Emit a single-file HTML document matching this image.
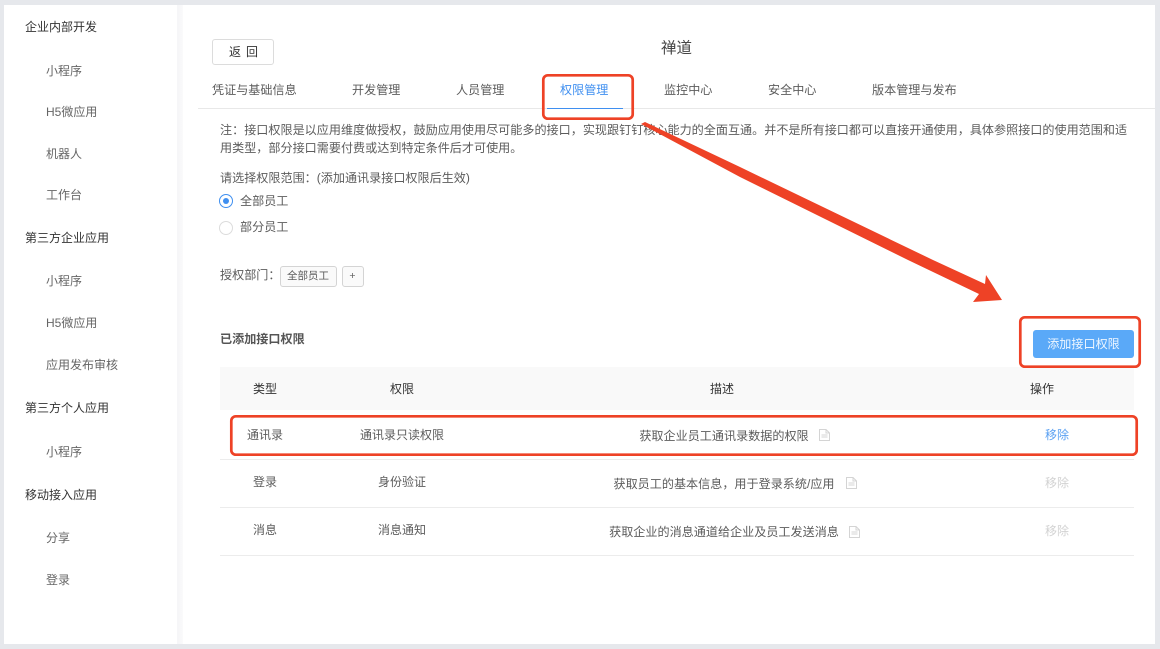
<!DOCTYPE html>
<html lang="zh">
<head>
<meta charset="utf-8">
<style>
html,body{margin:0;padding:0;width:1160px;height:649px;overflow:hidden;background:#e6e8ec}
body{position:relative;font-family:"Liberation Sans","Noto Sans CJK SC",sans-serif;font-size:12px;color:#5c5c5c}
#w{position:absolute;left:0;top:0;width:1160px;height:649px;filter:blur(.3px)}
.b{position:absolute}
.t{position:absolute;white-space:nowrap;line-height:20px;height:20px}
.c{transform:translateX(-50%)}
.h{color:#333}
.s{color:#666}
.l{position:absolute;height:1px;background:#ececec}
svg{position:absolute}
</style>
</head>
<body>
<div id="w">
<div class="b" style="left:4px;top:5px;width:173px;height:639px;background:#fff"></div>
<div class="b" style="left:177px;top:5px;width:6px;height:639px;background:linear-gradient(90deg,#f5f5f7,#fafafb)"></div>
<div class="b" style="left:183px;top:5px;width:972px;height:639px;background:#fff"></div>

<div class="t h" style="left:25px;top:17px">企业内部开发</div>
<div class="t s" style="left:46px;top:61px">小程序</div>
<div class="t s" style="left:46px;top:102px">H5微应用</div>
<div class="t s" style="left:46px;top:144px">机器人</div>
<div class="t s" style="left:46px;top:185px">工作台</div>
<div class="t h" style="left:25px;top:228px">第三方企业应用</div>
<div class="t s" style="left:46px;top:271px">小程序</div>
<div class="t s" style="left:46px;top:313px">H5微应用</div>
<div class="t s" style="left:46px;top:355px">应用发布审核</div>
<div class="t h" style="left:25px;top:398px">第三方个人应用</div>
<div class="t s" style="left:46px;top:442px">小程序</div>
<div class="t h" style="left:25px;top:485px">移动接入应用</div>
<div class="t s" style="left:46px;top:528px">分享</div>
<div class="t s" style="left:46px;top:570px">登录</div>

<div class="b" style="left:212px;top:39px;width:62px;height:26px;box-sizing:border-box;border:1px solid #dcdcdc;border-radius:3px;background:#fff"></div>
<div class="t h c" style="left:243.500px;top:42px;letter-spacing:5px;font-size:12px;text-indent:5px">返回</div>
<div class="t c" style="left:676.500px;top:39px;font-size:15.500px;color:#444">禅道</div>

<div class="t" style="left:212px;top:80px;font-size:12.100px">凭证与基础信息</div>
<div class="t" style="left:352px;top:80px;font-size:12.100px">开发管理</div>
<div class="t" style="left:456px;top:80px;font-size:12.100px">人员管理</div>
<div class="t" style="left:560px;top:80px;font-size:12.100px;color:#3f8ff0">权限管理</div>
<div class="t" style="left:664px;top:80px;font-size:12.100px">监控中心</div>
<div class="t" style="left:768px;top:80px;font-size:12.100px">安全中心</div>
<div class="t" style="left:872px;top:80px;font-size:12.100px">版本管理与发布</div>
<div class="l" style="left:198px;top:108px;width:957px;background:#e8e8e8"></div>
<div class="b" style="left:547px;top:107.500px;width:76px;height:1px;background:#3f8ff0"></div>

<div class="t" style="left:220px;top:120px;font-size:12.100px">注&#xFF1A;接口权限是以应用维度做授权&#xFF0C;鼓励应用使用尽可能多的接口&#xFF0C;实现跟钉钉核心能力的全面互通。并不是所有接口都可以直接开通使用&#xFF0C;具体参照接口的使用范围和适</div>
<div class="t" style="left:220px;top:138px;font-size:12.100px">用类型&#xFF0C;部分接口需要付费或达到特定条件后才可使用。</div>

<div class="t" style="left:220px;top:168px;font-size:12.100px">请选择权限范围&#xFF1A;(添加通讯录接口权限后生效)</div>
<div class="b" style="left:219px;top:194px;width:14px;height:14px;box-sizing:border-box;border:1px solid #3f8ff0;border-radius:50%;background:#fff"></div>
<div class="b" style="left:223px;top:198px;width:6px;height:6px;border-radius:50%;background:#3f8ff0"></div>
<div class="t" style="left:240px;top:191px;font-size:12.100px">全部员工</div>
<div class="b" style="left:219px;top:221px;width:14px;height:14px;box-sizing:border-box;border:1px solid #dcdcdc;border-radius:50%;background:#fff"></div>
<div class="t" style="left:240px;top:217px;font-size:12.100px">部分员工</div>

<div class="t" style="left:220px;top:265px;font-size:12.100px">授权部门&#xFF1A;</div>
<div class="b" style="left:280px;top:266px;width:57px;height:21px;box-sizing:border-box;border:1px solid #d4d4d4;border-radius:3px;background:#fafafa"></div>
<div class="t c" style="left:308px;top:266px;font-size:10.500px">全部员工</div>
<div class="b" style="left:342px;top:266px;width:22px;height:21px;box-sizing:border-box;border:1px solid #d4d4d4;border-radius:3px;background:#fafafa"></div>
<div class="t c" style="left:352.500px;top:266px;font-size:10.500px">+</div>

<div class="t" style="left:220px;top:329px;font-size:12.100px;font-weight:bold;color:#555">已添加接口权限</div>
<div class="b" style="left:1033px;top:330px;width:101px;height:28px;background:#5aa9f8;border-radius:3px"></div>
<div class="t c" style="left:1083.500px;top:334px;font-size:12.100px;color:#eef6ff">添加接口权限</div>

<div class="b" style="left:220px;top:367px;width:914px;height:43px;background:#f9f9f9"></div>
<div class="t h c" style="left:265px;top:379px">类型</div>
<div class="t h c" style="left:402px;top:379px">权限</div>
<div class="t h c" style="left:722px;top:379px">描述</div>
<div class="t h c" style="left:1042px;top:379px">操作</div>

<div class="t c" style="left:265px;top:425px">通讯录</div>
<div class="t c" style="left:402px;top:425px">通讯录只读权限</div>
<div class="t c" style="left:724px;top:425.500px;font-size:12.100px">获取企业员工通讯录数据的权限</div>
<div class="t c" style="left:1057px;top:425px;color:#5aa0f2">移除</div>
<div class="l" style="left:220px;top:459px;width:914px"></div>

<div class="t c" style="left:265px;top:472px">登录</div>
<div class="t c" style="left:402px;top:472px">身份验证</div>
<div class="t c" style="left:724px;top:473.500px;font-size:12.100px">获取员工的基本信息&#xFF0C;用于登录系统/应用</div>
<div class="t c" style="left:1057px;top:473px;color:#d2d2d2">移除</div>
<div class="l" style="left:220px;top:507px;width:914px"></div>

<div class="t c" style="left:265px;top:520px">消息</div>
<div class="t c" style="left:402px;top:520px">消息通知</div>
<div class="t c" style="left:724px;top:522px;font-size:12.100px">获取企业的消息通道给企业及员工发送消息</div>
<div class="t c" style="left:1057px;top:521px;color:#d2d2d2">移除</div>
<div class="l" style="left:220px;top:555px;width:914px"></div>

<svg style="left:819px;top:429px" width="11" height="12" viewBox="0 0 11 12"><path d="M.5.5H7L10.500 4V11.500H.5ZM7 .5V4H10.500M2.500 6H8.500M2.500 8H8.500" fill="none" stroke="#d4d4d4"/></svg>
<svg style="left:846px;top:477px" width="11" height="12" viewBox="0 0 11 12"><path d="M.5.5H7L10.500 4V11.500H.5ZM7 .5V4H10.500M2.500 6H8.500M2.500 8H8.500" fill="none" stroke="#d4d4d4"/></svg>
<svg style="left:849px;top:526px" width="11" height="12" viewBox="0 0 11 12"><path d="M.5.5H7L10.500 4V11.500H.5ZM7 .5V4H10.500M2.500 6H8.500M2.500 8H8.500" fill="none" stroke="#d4d4d4"/></svg>

<svg style="left:0;top:0" width="1160" height="649" viewBox="0 0 1160 649">
<g fill="none" stroke="#ee4226" stroke-width="2.700">
<rect x="543.300" y="75.300" width="89.400" height="43.400" rx="4.500"/>
<rect x="1020.300" y="317.300" width="119.400" height="49.400" rx="4.500"/>
<rect x="231.300" y="416.300" width="905.400" height="38.400" rx="4.500"/>
</g>
<polygon points="641,124 645,122 740,167 933,260 985,284 986,275 1002,300 973,302 979,294 908,260 740,177" fill="#ee4226"/>
</svg>
</div>
</body>
</html>
